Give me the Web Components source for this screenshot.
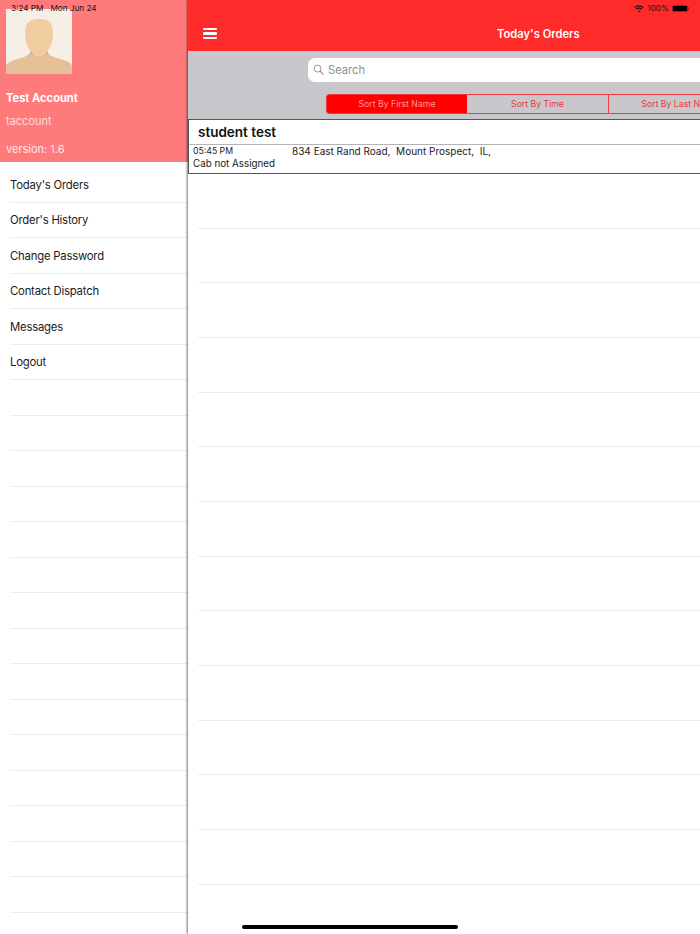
<!DOCTYPE html>
<html>
<head>
<meta charset="utf-8">
<title>Today's Orders</title>
<style>
    html, body { margin: 0; padding: 0; width: 700px; height: 934px; overflow: hidden; background: #fff; }
    body { font-family: Inter, "Liberation Sans", sans-serif; }
</style>
</head>
<body>
<app-shell>
    <side-menu slot="menu" name="Test Account" login="taccount" version="version: 1.6">
        <menu-row>Today's Orders</menu-row>
        <menu-row>Order's History</menu-row>
        <menu-row>Change Password</menu-row>
        <menu-row>Contact Dispatch</menu-row>
        <menu-row>Messages</menu-row>
        <menu-row>Logout</menu-row>
    </side-menu>
    <orders-view slot="main">
        <order-card name="student test" time="05:45 PM" cab="Cab not Assigned" address="834 East Rand Road,&nbsp; Mount Prospect,&nbsp; IL,"></order-card>
    </orders-view>
</app-shell>
<status-bar></status-bar>
<home-bar></home-bar>

<script>
// ==================== App shell ====================
class AppShell extends HTMLElement {
    constructor() {
        super();
        this.attachShadow({ mode: 'open' });
        this.shadowRoot.innerHTML = `
            <style>
                :host { display: flex; width: 700px; height: 934px; overflow: hidden; }
                .menu { flex: 0 0 188px; width: 188px; height: 934px; overflow: hidden; }
                .main {
                    flex: 0 0 512px;
                    height: 934px;
                    overflow: hidden;
                    box-shadow: -1px 0 2px rgba(0, 0, 0, 0.55);
                    position: relative;
                }
            </style>
            <div class="menu"><slot name="menu"></slot></div>
            <div class="main"><slot name="main"></slot></div>
        `;
    }
}

// ==================== Side menu ====================
class SideMenu extends HTMLElement {
    constructor() {
        super();
        this.attachShadow({ mode: 'open' });
    }

    connectedCallback() {
        const name = this.getAttribute('name') || '';
        const login = this.getAttribute('login') || '';
        const version = this.getAttribute('version') || '';
        let blanks = '';
        for (let i = 0; i < 16; i++) blanks += '<menu-row></menu-row>';

        this.shadowRoot.innerHTML = `
            <style>
                :host { display: block; width: 188px; background: #fff; }
                .head {
                    height: 162px;
                    background: #ff7b7b;
                    color: #fff;
                    box-sizing: border-box;
                    padding: 9px 0 0 6px;
                    display: flex;
                    flex-direction: column;
                }
                svg { display: block; width: 66px; height: 65px; }
                .name { margin-top: 17px; font-size: 11.1px; line-height: 15px; font-weight: 700; }
                .login { margin-top: 7px; font-size: 11px; line-height: 16px; color: #ffdcdc; }
                .version { margin-top: 12px; font-size: 11px; line-height: 16px; color: #ffe6e6; }
                .rows { padding: 5px 0 0 10px; }
            </style>
            <div class="head">
                <svg viewBox="0 0 66 65" aria-hidden="true">
                    <rect width="66" height="65" fill="#f5efe6"/>
                    <path d="M0 65V57C1 52 10 51 18 48C23 46 25 44 25 40H41C41 44 43 46 48 48C56 51 65 52 66 57V65Z" fill="#e5bf97"/>
                    <path d="M24 44C27 48 39 48 42 44C41 42 41 41 41 40H25C25 41 25 42 24 44Z" fill="#d3ab84"/>
                    <path d="M33 10C23 10 19 14 19 25C19 34 25 48 33 48C41 48 47 34 47 25C47 14 43 10 33 10Z" fill="#f0cd9f"/>
                </svg>
                <div class="name">${name}</div>
                <div class="login">${login}</div>
                <div class="version">${version}</div>
            </div>
            <div class="rows">
                <slot></slot>
                ${blanks}
            </div>
        `;
    }
}

class MenuRow extends HTMLElement {
    constructor() {
        super();
        this.attachShadow({ mode: 'open' });
        this.shadowRoot.innerHTML = `
            <style>
                :host {
                    display: flex;
                    align-items: center;
                    height: 35.5px;
                    box-sizing: border-box;
                    padding-top: 1px;
                    border-bottom: 1px solid #ececee;
                    font-size: 11.3px;
                    letter-spacing: -0.2px;
                    color: #1a1a1a;
                }
            </style>
            <slot></slot>
        `;
    }
}

// ==================== Orders screen ====================
class OrdersView extends HTMLElement {
    constructor() {
        super();
        this.attachShadow({ mode: 'open' });
        let lines = '';
        for (let i = 0; i < 13; i++) lines += '<div class="line"></div>';
        this.shadowRoot.innerHTML = `
            <style>
                :host { display: block; width: 512px; height: 934px; background: #fff; }
                .tools {
                    height: 68px;
                    box-sizing: border-box;
                    background: #c8c8cc;
                    padding: 7px 0 0 120px;
                    display: flex;
                    flex-direction: column;
                }
                .lines { padding-left: 10px; }
                .line { height: 54.67px; box-sizing: border-box; border-bottom: 1px solid #ececee; }
            </style>
            <nav-bar>Today's Orders</nav-bar>
            <div class="tools">
                <search-field placeholder="Search"></search-field>
                <sort-tabs></sort-tabs>
            </div>
            <slot></slot>
            <div class="lines">${lines}</div>
        `;
    }
}

class NavBar extends HTMLElement {
    constructor() {
        super();
        this.attachShadow({ mode: 'open' });
        this.shadowRoot.innerHTML = `
            <style>
                :host {
                    display: flex;
                    align-items: flex-start;
                    height: 51px;
                    box-sizing: border-box;
                    padding: 28px 0 0 15px;
                    background: #ff2a2a;
                    color: #fff;
                }
                .burger { display: flex; flex-direction: column; gap: 2px; width: 14px; }
                .burger i { display: block; height: 2.4px; background: #fff; border-radius: 1px; }
                .title {
                    position: absolute;
                    top: 27px;
                    left: 309px;
                    font-size: 11.2px;
                    line-height: 15px;
                    font-weight: 600;
                    white-space: nowrap;
                }
            </style>
            <div class="burger"><i></i><i></i><i></i></div>
            <div class="title"><slot></slot></div>
        `;
    }
}

class SearchField extends HTMLElement {
    constructor() {
        super();
        this.attachShadow({ mode: 'open' });
    }

    connectedCallback() {
        const placeholder = this.getAttribute('placeholder') || '';
        this.shadowRoot.innerHTML = `
            <style>
                :host {
                    display: flex;
                    align-items: center;
                    gap: 4px;
                    height: 24px;
                    width: 420px;
                    box-sizing: border-box;
                    padding: 0 0 1px 5px;
                    background: #fff;
                    border-radius: 7px;
                    color: #8e8e93;
                    font-size: 11.2px;
                }
                svg { width: 11px; height: 11px; display: block; }
            </style>
            <svg viewBox="0 0 12 12" fill="none" stroke="#8e8e93" aria-hidden="true">
                <circle cx="5" cy="5" r="3.8" stroke-width="1"/>
                <path d="M7.7 7.7L11 11" stroke-width="1.3" stroke-linecap="round"/>
            </svg>
            <span>${placeholder}</span>
        `;
    }
}

class SortTabs extends HTMLElement {
    constructor() {
        super();
        this.attachShadow({ mode: 'open' });
        this.shadowRoot.innerHTML = `
            <style>
                :host {
                    display: flex;
                    margin: 12px 0 0 18px;
                    height: 20px;
                    width: 424px;
                    box-sizing: border-box;
                    border: 1px solid #f03a3f;
                    border-radius: 3px 0 0 3px;
                    font-size: 8.7px;
                    color: #e8383d;
                }
                div {
                    flex: 0 0 141px;
                    box-sizing: border-box;
                    display: flex;
                    align-items: center;
                    justify-content: center;
                    white-space: nowrap;
                }
                .on { flex-basis: 140px; background: #ff0000; color: #ff9a9a; border-radius: 2px 0 0 2px; }
                .mid { flex-basis: 142px; border-right: 1px solid #f03a3f; }
            </style>
            <div class="on">Sort By First Name</div>
            <div class="mid">Sort By Time</div>
            <div>Sort By Last Name</div>
        `;
    }
}

class OrderCard extends HTMLElement {
    constructor() {
        super();
        this.attachShadow({ mode: 'open' });
    }

    connectedCallback() {
        this.shadowRoot.innerHTML = `
            <style>
                :host {
                    display: block;
                    height: 55px;
                    box-sizing: border-box;
                    border: 1px solid #55555a;
                    border-right: 0;
                    color: #1a1a1a;
                    background: #fff;
                }
                .name {
                    height: 25px;
                    box-sizing: border-box;
                    border-bottom: 1px solid #b4b4b8;
                    padding-left: 9px;
                    font-size: 13.5px;
                    line-height: 24px;
                    font-weight: 600;
                    color: #111;
                }
                .row { display: flex; padding: 0 0 0 4px; }
                .left { flex: 0 0 99px; }
                .time { font-size: 8.7px; line-height: 12px; }
                .cab { font-size: 9.8px; line-height: 12px; margin-top: 1px; }
                .address { font-size: 10px; line-height: 12px; white-space: nowrap; }
            </style>
            <div class="name">${this.getAttribute('name')}</div>
            <div class="row">
                <div class="left">
                    <div class="time">${this.getAttribute('time')}</div>
                    <div class="cab">${this.getAttribute('cab')}</div>
                </div>
                <div class="address">${this.getAttribute('address')}</div>
            </div>
        `;
    }
}

// ==================== System overlays ====================
class StatusBar extends HTMLElement {
    constructor() {
        super();
        this.attachShadow({ mode: 'open' });
        this.shadowRoot.innerHTML = `
            <style>
                :host {
                    position: absolute;
                    top: 3px;
                    left: 0;
                    width: 700px;
                    height: 11px;
                    font-size: 8.2px;
                    line-height: 11px;
                    color: #141414;
                }
                .time { position: absolute; left: 11px; top: 0; white-space: nowrap; }
                .right { position: absolute; right: 11px; top: 0; display: flex; align-items: center; gap: 3px; height: 11px; }
                svg { display: block; }
                .batt { display: flex; align-items: center; }
                .batt b { display: block; width: 14px; height: 5px; background: #000; border: 1px solid #a32024; border-radius: 2px; }
                .batt i { display: block; width: 1px; height: 3px; background: #a32024; }
            </style>
            <div class="time">3:24 PM&nbsp;&nbsp; Mon Jun 24</div>
            <div class="right">
                <svg width="10" height="8" viewBox="0 0 10 8" fill="none" stroke="#141414" aria-hidden="true">
                    <path d="M0.6 2.6C3 0.4 7 0.4 9.4 2.6" stroke-width="1.2"/>
                    <path d="M2.2 4.3C3.8 2.9 6.2 2.9 7.8 4.3" stroke-width="1.2"/>
                    <path d="M3.8 6C4.5 5.3 5.5 5.3 6.2 6L5 7.4Z" fill="#141414" stroke="none"/>
                </svg>
                <span>100%</span>
                <div class="batt"><b></b><i></i></div>
            </div>
        `;
    }
}

class HomeBar extends HTMLElement {
    constructor() {
        super();
        this.attachShadow({ mode: 'open' });
        this.shadowRoot.innerHTML = `
            <style>
                :host {
                    position: absolute;
                    left: 242px;
                    top: 925px;
                    width: 216px;
                    height: 4px;
                    border-radius: 2px;
                    background: #000;
                }
            </style>
        `;
    }
}

customElements.define('menu-row', MenuRow);
customElements.define('side-menu', SideMenu);
customElements.define('nav-bar', NavBar);
customElements.define('search-field', SearchField);
customElements.define('sort-tabs', SortTabs);
customElements.define('order-card', OrderCard);
customElements.define('orders-view', OrdersView);
customElements.define('status-bar', StatusBar);
customElements.define('home-bar', HomeBar);
customElements.define('app-shell', AppShell);
</script>
</body>
</html>
